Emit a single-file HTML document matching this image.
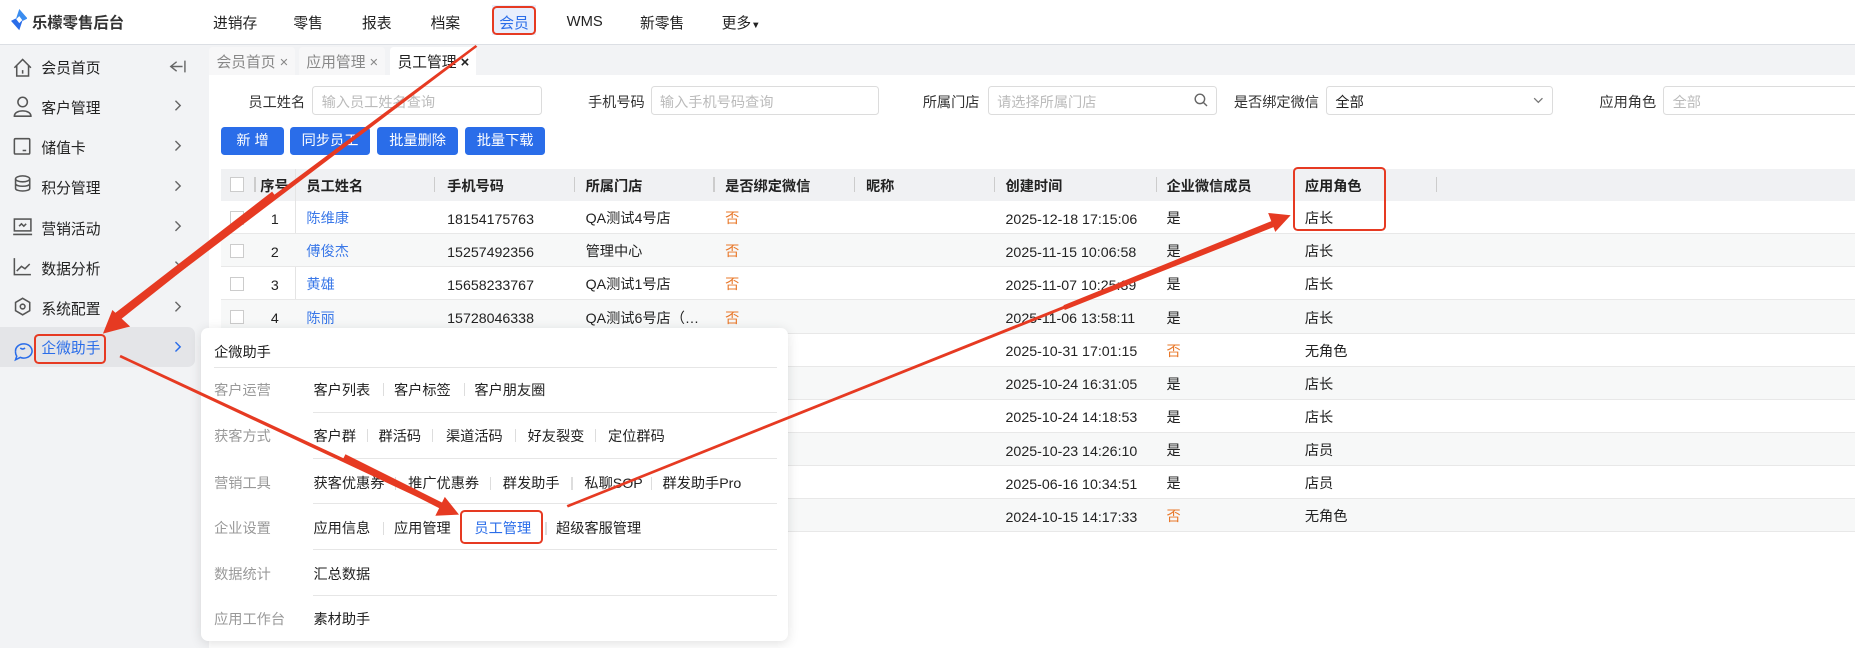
<!DOCTYPE html>
<html><head><meta charset="utf-8">
<style>
*{box-sizing:border-box;margin:0;padding:0}
html,body{width:1855px;height:648px;overflow:hidden;background:#fff}
#w{zoom:1.183;width:1568px;height:548px;position:relative;font-family:"Liberation Sans","Noto Sans CJK SC",sans-serif;font-size:12px;color:#222;overflow:hidden}
.a{position:absolute;white-space:nowrap}
.n{margin-top:2px}
.top{left:0;top:0;width:1568px;height:38px;background:#fff;border-bottom:1px solid #dcdfe4}
.side{left:0;top:38px;width:170px;height:510px;background:#f2f3f5}
.main{left:170px;top:38px;width:1398px;height:510px;background:#f2f3f5}
.panel{left:177px;top:63px;width:1391px;height:485px;background:#fff}
.nav{top:10px;font-size:12.5px;color:#222}
.si{left:35px;font-size:12.5px;color:#222}
.tab{top:40px;height:24px;background:#f7f7f8;color:#888;padding:3px 6px;font-size:12.5px;border-radius:3px 3px 0 0}
.lab{top:78px;font-size:12px;color:#333}
.inp{top:73px;height:24px;border:1px solid #dcdcdc;border-radius:3px;color:#bbb;padding:4px 7px;font-size:12px}
.btn{top:107px;height:24px;background:#2a6de9;color:#fff;border-radius:3px;text-align:center;line-height:24px;font-size:12px}
.th{left:187px;top:143px;width:1381px;height:27px;background:#f0f1f3}
.hd{top:149px;font-weight:bold;font-size:12px;color:#222}
.sep{top:150px;width:1px;height:12px;background:#ccc}
.row{left:187px;width:1381px;height:28px;border-bottom:1px solid #e8e8e8}
.cb{width:12px;height:12px;border:1px solid #ccc;background:#fff;left:194px}
.c{font-size:12px}
.bl{color:#3a78e8}
.or{color:#e8782a}
.pop{left:170px;top:277px;width:496px;height:265px;background:#fff;border-radius:6px;box-shadow:0 2px 10px rgba(0,0,0,.12)}
.pl{left:181px;color:#999;font-size:12px}
.pi{font-size:12px;color:#222}
.vs{width:1px;height:11px;background:#ddd}
.hl{left:265px;width:392px;height:1px;background:#e6e6e6}
.rb{border:2px solid #e63a22;border-radius:4px}
</style></head><body><div id="w">
<div class="a top"></div>
<svg class="a" style="left:9px;top:8px" width="14" height="18" viewBox="0 0 14 18"><path d="M7 0L14 8 10 10 7 6 4 9 Z" fill="#3a8df0"/><path d="M7 18L0 10 4 8 7 12 10 9Z" fill="#2a6de9"/></svg>
<div class="a" style="left:27px;top:9px;font-weight:bold;font-size:13px;color:#333">乐檬零售后台</div>
<div class="a nav" style="left:180px">进销存</div>
<div class="a nav" style="left:248px">零售</div>
<div class="a nav" style="left:306px">报表</div>
<div class="a nav" style="left:364px">档案</div>
<div class="a" style="left:416px;top:4px;width:37px;height:26px;background:#e8eefc"></div>
<div class="a nav" style="left:422px;color:#2a6de9">会员</div>
<div class="a nav" style="left:479px;top:12px">WMS</div>
<div class="a nav" style="left:541px">新零售</div>
<div class="a nav" style="left:610px">更多<span style="font-size:8px">▼</span></div>

<div class="a side"></div>
<div class="a main"></div>
<div class="a" style="left:0;top:276px;width:165px;height:34px;background:#e4e5e8;border-radius:0 6px 6px 0"></div>
<svg class="a" style="left:10px;top:48px" width="18" height="260" viewBox="0 0 18 260" fill="none" stroke="#555" stroke-width="1.3">
<path d="M2 9L9 2 16 9M4 7V16H14V7M9 11V14"/>
<circle cx="9" cy="38" r="4"/><path d="M2 50C2 44 16 44 16 50Z"/>
<rect x="2" y="69" width="13" height="13" rx="1"/><path d="M9 79h3"/>
<ellipse cx="9" cy="103" rx="6" ry="2.5"/><path d="M3 103v8c0 3 12 3 12 0v-8M3 107c0 3 12 3 12 0"/>
<rect x="2" y="137" width="14" height="10"/><path d="M1 150h16M6 143l2-2 2 2 2-2"/>
<path d="M2 170v14h14M4 181l4-4 3 2 4-4"/>
<path d="M9 204l6 3.5v7L9 218l-6-3.5v-7Z"/><circle cx="9" cy="211" r="2"/>
<path d="M3 249a7 6 0 1 1 4 5l-4 2 1-3a6 6 0 0 1-1-4" stroke="#2a6de9"/><path d="M7 246q2 2 4 0" stroke="#2a6de9"/>
</svg>
<svg class="a" style="left:140px;top:48px" width="20" height="260" viewBox="0 0 20 260" fill="none" stroke="#666" stroke-width="1.2">
<path d="M16 3v10M9 4l-5 4 5 4M4 8h10"/>
<path d="M8 37l4 4-4 4"/><path d="M8 71l4 4-4 4"/><path d="M8 105l4 4-4 4"/><path d="M8 139l4 4-4 4"/><path d="M8 173l4 4-4 4"/><path d="M8 207l4 4-4 4"/><path d="M8 241l4 4-4 4" stroke="#2a6de9"/>
</svg>
<div class="a si" style="top:48px">会员首页</div>
<div class="a si" style="top:82px">客户管理</div>
<div class="a si" style="top:116px">储值卡</div>
<div class="a si" style="top:150px">积分管理</div>
<div class="a si" style="top:184px">营销活动</div>
<div class="a si" style="top:218px">数据分析</div>
<div class="a si" style="top:252px">系统配置</div>
<div class="a si" style="top:285px;color:#2a6de9">企微助手</div>

<div class="a tab" style="left:177px">会员首页 ×</div>
<div class="a tab" style="left:253px">应用管理 ×</div>
<div class="a tab" style="left:330px;background:#fff;color:#222">员工管理 <b>×</b></div>
<div class="a panel"></div>

<div class="a lab" style="left:210px">员工姓名</div><div class="a inp" style="left:264px;width:194px">输入员工姓名查询</div>
<div class="a lab" style="left:497px">手机号码</div><div class="a inp" style="left:550px;width:193px">输入手机号码查询</div>
<div class="a lab" style="left:780px">所属门店</div><div class="a inp" style="left:835px;width:194px">请选择所属门店<svg style="position:absolute;right:7px;top:5px" width="12" height="12" viewBox="0 0 12 12" fill="none" stroke="#666" stroke-width="1.2"><circle cx="5" cy="5" r="4"/><path d="M8 8l3 3"/></svg></div>
<div class="a lab" style="left:1043px">是否绑定微信</div><div class="a inp" style="left:1121px;width:192px;color:#222">全部<svg style="position:absolute;right:7px;top:8px" width="9" height="6" viewBox="0 0 9 6" fill="none" stroke="#777" stroke-width="1.1"><path d="M1 1l3.5 3.5L8 1"/></svg></div>
<div class="a lab" style="left:1352px">应用角色</div><div class="a inp" style="left:1406px;width:170px">全部</div>

<div class="a btn" style="left:187px;width:53px">新 增</div>
<div class="a btn" style="left:245px;width:68px">同步员工</div>
<div class="a btn" style="left:319px;width:68px">批量删除</div>
<div class="a btn" style="left:393px;width:68px">批量下载</div>

<div class="a th"></div>
<div class="a cb" style="top:150px"></div>
<div class="a sep" style="left:215px"></div><div class="a hd" style="left:220px">序号</div>
<div class="a" style="left:249px;top:143px;width:1px;height:155px;background:#e4e4e4"></div>
<div class="a hd" style="left:259px">员工姓名</div>
<div class="a sep" style="left:367px"></div><div class="a hd" style="left:378px">手机号码</div>
<div class="a sep" style="left:485px"></div><div class="a hd" style="left:495px">所属门店</div>
<div class="a sep" style="left:603px"></div><div class="a hd" style="left:613px">是否绑定微信</div>
<div class="a sep" style="left:722px"></div><div class="a hd" style="left:732px">昵称</div>
<div class="a sep" style="left:840px"></div><div class="a hd" style="left:850px">创建时间</div>
<div class="a sep" style="left:977px"></div><div class="a hd" style="left:986px">企业微信成员</div>
<div class="a sep" style="left:1094px"></div><div class="a hd" style="left:1103px">应用角色</div>
<div class="a sep" style="left:1214px"></div>

<div class="a row" style="top:170px"></div>
<div class="a row" style="top:198px;background:#f7f8f8"></div>
<div class="a row" style="top:226px"></div>
<div class="a row" style="top:254px;background:#f7f8f8"></div>
<div class="a row" style="top:282px"></div>
<div class="a row" style="top:310px;background:#f7f8f8"></div>
<div class="a row" style="top:338px"></div>
<div class="a row" style="top:366px;background:#f7f8f8"></div>
<div class="a row" style="top:394px"></div>
<div class="a row" style="top:422px;background:#f7f8f8"></div>

<div class="a cb" style="top:178px"></div><div class="a c n" style="left:229px;top:177px">1</div><div class="a c bl" style="left:259px;top:176px">陈维康</div><div class="a c n" style="left:378px;top:177px">18154175763</div><div class="a c" style="left:495px;top:176px">QA测试4号店</div><div class="a c or" style="left:613px;top:176px">否</div>
<div class="a cb" style="top:206px"></div><div class="a c n" style="left:229px;top:205px">2</div><div class="a c bl" style="left:259px;top:204px">傅俊杰</div><div class="a c n" style="left:378px;top:205px">15257492356</div><div class="a c" style="left:495px;top:204px">管理中心</div><div class="a c or" style="left:613px;top:204px">否</div>
<div class="a cb" style="top:234px"></div><div class="a c n" style="left:229px;top:233px">3</div><div class="a c bl" style="left:259px;top:232px">黄雄</div><div class="a c n" style="left:378px;top:233px">15658233767</div><div class="a c" style="left:495px;top:232px">QA测试1号店</div><div class="a c or" style="left:613px;top:232px">否</div>
<div class="a cb" style="top:262px"></div><div class="a c n" style="left:229px;top:261px">4</div><div class="a c bl" style="left:259px;top:260px">陈丽</div><div class="a c n" style="left:378px;top:261px">15728046338</div><div class="a c" style="left:495px;top:260px">QA测试6号店（…</div><div class="a c or" style="left:613px;top:260px">否</div>

<div class="a c n" style="left:850px;top:177px">2025-12-18 17:15:06</div><div class="a c" style="left:986px;top:176px">是</div><div class="a c" style="left:1103px;top:176px">店长</div>
<div class="a c n" style="left:850px;top:205px">2025-11-15 10:06:58</div><div class="a c" style="left:986px;top:204px">是</div><div class="a c" style="left:1103px;top:204px">店长</div>
<div class="a c n" style="left:850px;top:233px">2025-11-07 10:25:39</div><div class="a c" style="left:986px;top:232px">是</div><div class="a c" style="left:1103px;top:232px">店长</div>
<div class="a c n" style="left:850px;top:261px">2025-11-06 13:58:11</div><div class="a c" style="left:986px;top:260px">是</div><div class="a c" style="left:1103px;top:260px">店长</div>
<div class="a c n" style="left:850px;top:289px">2025-10-31 17:01:15</div><div class="a c or" style="left:986px;top:288px">否</div><div class="a c" style="left:1103px;top:288px">无角色</div>
<div class="a c n" style="left:850px;top:317px">2025-10-24 16:31:05</div><div class="a c" style="left:986px;top:316px">是</div><div class="a c" style="left:1103px;top:316px">店长</div>
<div class="a c n" style="left:850px;top:345px">2025-10-24 14:18:53</div><div class="a c" style="left:986px;top:344px">是</div><div class="a c" style="left:1103px;top:344px">店长</div>
<div class="a c n" style="left:850px;top:373px">2025-10-23 14:26:10</div><div class="a c" style="left:986px;top:372px">是</div><div class="a c" style="left:1103px;top:372px">店员</div>
<div class="a c n" style="left:850px;top:401px">2025-06-16 10:34:51</div><div class="a c" style="left:986px;top:400px">是</div><div class="a c" style="left:1103px;top:400px">店员</div>
<div class="a c n" style="left:850px;top:429px">2024-10-15 14:17:33</div><div class="a c or" style="left:986px;top:428px">否</div><div class="a c" style="left:1103px;top:428px">无角色</div>

<div class="a pop"></div>
<div class="a" style="left:181px;top:289px;font-size:12px;color:#222">企微助手</div>
<div class="a" style="left:181px;top:310px;width:476px;height:1px;background:#e6e6e6"></div>
<div class="a pl" style="top:321px">客户运营</div>
<div class="a pi" style="left:265px;top:321px">客户列表</div><div class="a vs" style="left:324px;top:324px"></div><div class="a pi" style="left:333px;top:321px">客户标签</div><div class="a vs" style="left:392px;top:324px"></div><div class="a pi" style="left:401px;top:321px">客户朋友圈</div>
<div class="a hl" style="top:348px"></div>
<div class="a pl" style="top:360px">获客方式</div>
<div class="a pi" style="left:265px;top:360px">客户群</div><div class="a vs" style="left:310px;top:363px"></div><div class="a pi" style="left:320px;top:360px">群活码</div><div class="a vs" style="left:365px;top:363px"></div><div class="a pi" style="left:377px;top:360px">渠道活码</div><div class="a vs" style="left:435px;top:363px"></div><div class="a pi" style="left:446px;top:360px">好友裂变</div><div class="a vs" style="left:503px;top:363px"></div><div class="a pi" style="left:514px;top:360px">定位群码</div>
<div class="a hl" style="top:387px"></div>
<div class="a pl" style="top:400px">营销工具</div>
<div class="a pi" style="left:265px;top:400px">获客优惠券</div><div class="a vs" style="left:334px;top:403px"></div><div class="a pi" style="left:345px;top:400px">推广优惠券</div><div class="a vs" style="left:414px;top:403px"></div><div class="a pi" style="left:425px;top:400px">群发助手</div><div class="a vs" style="left:483px;top:403px"></div><div class="a pi" style="left:494px;top:400px">私聊SOP</div><div class="a vs" style="left:550px;top:403px"></div><div class="a pi" style="left:560px;top:400px">群发助手Pro</div>
<div class="a hl" style="top:425px"></div>
<div class="a pl" style="top:438px">企业设置</div>
<div class="a pi" style="left:265px;top:438px">应用信息</div><div class="a vs" style="left:324px;top:441px"></div><div class="a pi" style="left:333px;top:438px">应用管理</div><div class="a pi" style="left:401px;top:438px;color:#2a6de9">员工管理</div><div class="a vs" style="left:461px;top:441px"></div><div class="a pi" style="left:470px;top:438px">超级客服管理</div>
<div class="a hl" style="top:464px"></div>
<div class="a pl" style="top:477px">数据统计</div>
<div class="a pi" style="left:265px;top:477px">汇总数据</div>
<div class="a hl" style="top:503px"></div>
<div class="a pl" style="top:515px">应用工作台</div>
<div class="a pi" style="left:265px;top:515px">素材助手</div>

<div class="a rb" style="left:416px;top:5px;width:37px;height:25px"></div>
<div class="a rb" style="left:29px;top:282px;width:61px;height:26px"></div>
<div class="a rb" style="left:389px;top:431px;width:70px;height:29px"></div>
<div class="a rb" style="left:1093px;top:141px;width:79px;height:54px"></div>

<svg class="a" style="left:0;top:0" width="1568" height="548" viewBox="0 0 1568 548">
<g fill="#e63a22">
<polygon points="402,38 403.5,39.5 97,272 93,268"/>
<polygon points="230,162 233,166 97,274 93,268"/>
<polygon points="87,282 95,262 110,276"/>
<polygon points="101,302 102,300 378,428 376,431"/>
<polygon points="290,388 292,384 378,427 376,432"/>
<polygon points="388,435 368,436 376,420"/>
<polygon points="480,429 479,427 1080,186 1082,188"/>
<polygon points="900,262 899,258 1082,184 1084,189"/>
<polygon points="1091,182 1072,180 1078,196"/>
</g>
</svg>
</div></body></html>
